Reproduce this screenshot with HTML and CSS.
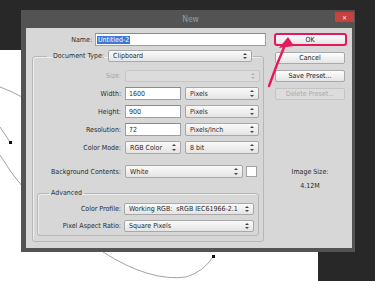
FILE: index.html
```html
<!DOCTYPE html>
<html lang="en">
<head>
  <meta charset="UTF-8" />
  <title>New</title>
  <link rel="stylesheet" href="styles.css">
</head>
<body>
  <!-- document canvas behind the dialog -->
  <div class="doc"></div>
  <svg class="paths" width="375" height="281" viewBox="0 0 375 281">
    <path d="M0 87 Q11 91 22 97" />
    <path d="M0 127 L10 142" />
    <path d="M0 155 Q10 172 22 186" />
    <path d="M103 252 Q150 282 186 277 Q203 272 213 257" />
    <rect class="anchor" x="9" y="141" width="3" height="3" />
    <rect class="anchor" x="212" y="255" width="3" height="3" />
  </svg>

  <div class="dialog">
    <div class="titlebar">
      <span class="title">New</span>
      <span class="close">&#x2715;</span>
    </div>
    <div class="panel">
      <div class="form">
        <div class="row name-row">
          <label class="lbl">Name:</label>
          <div class="input name"><span class="hl">Untitled-2</span></div>
        </div>

        <fieldset class="group">
          <legend>
            <label class="lbl doc-lbl">Document Type:</label>
            <div class="select doctype">Clipboard</div>
          </legend>
          <div class="row">
            <label class="lbl off">Size:</label>
            <div class="select off size"></div>
          </div>
          <div class="row">
            <label class="lbl">Width:</label>
            <div class="input num">1600</div>
            <div class="select unit">Pixels</div>
          </div>
          <div class="row">
            <label class="lbl">Height:</label>
            <div class="input num">900</div>
            <div class="select unit">Pixels</div>
          </div>
          <div class="row">
            <label class="lbl">Resolution:</label>
            <div class="input num">72</div>
            <div class="select unit">Pixels/Inch</div>
          </div>
          <div class="row">
            <label class="lbl">Color Mode:</label>
            <div class="select num">RGB Color</div>
            <div class="select unit">8 bit</div>
          </div>
          <div class="row bg-row">
            <label class="lbl">Background Contents:</label>
            <div class="select bgc">White</div>
            <div class="swatch"></div>
          </div>

          <fieldset class="group adv">
            <legend>Advanced</legend>
            <div class="row">
              <label class="lbl">Color Profile:</label>
              <div class="select wide">Working RGB:&nbsp; sRGB IEC61966-2.1</div>
            </div>
            <div class="row">
              <label class="lbl">Pixel Aspect Ratio:</label>
              <div class="select wide">Square Pixels</div>
            </div>
          </fieldset>
        </fieldset>
      </div>

      <div class="side">
        <button class="btn ok">OK</button>
        <button class="btn">Cancel</button>
        <button class="btn">Save Preset...</button>
        <button class="btn off">Delete Preset...</button>
        <div class="img-size">Image Size:</div>
        <div class="img-val">4.12M</div>
      </div>
    </div>
  </div>

  <!-- annotation arrow -->
  <svg class="arrow" width="375" height="281" viewBox="0 0 375 281">
    <path d="M269 86 Q276 66 285 45" />
    <polygon points="288,37 279,48 294,46" />
  </svg>
</body>
</html>
```

FILE: styles.css
```css
* {
  box-sizing: border-box;
}

body {
  margin: 0;
  width: 375px;
  height: 281px;
  overflow: hidden;
  position: relative;
  background-color: #282828;
  font-family: 'DejaVu Sans Condensed', 'DejaVu Sans', sans-serif;
  font-size: 7px;
  color: #2a2a2a;
}

.doc {
  position: absolute;
  left: 0;
  top: 50px;
  width: 318px;
  height: 231px;
  background: #ffffff;
}

.paths,
.arrow {
  position: absolute;
  left: 0;
  top: 0;
  pointer-events: none;
}

.paths path {
  fill: none;
  stroke: #8a8a8a;
  stroke-width: 0.8;
}

.paths .anchor {
  fill: #111;
}

.arrow path {
  fill: none;
  stroke: #e8185c;
  stroke-width: 2.4;
  stroke-linecap: round;
}

.arrow polygon {
  fill: #e8185c;
}

/* dialog window */
.dialog {
  position: absolute;
  left: 21px;
  top: 10px;
  width: 334px;
  height: 242px;
  background: #535353;
  padding: 0 3px 4px 5px;
  display: flex;
  flex-direction: column;
}

.titlebar {
  height: 18px;
  display: flex;
  align-items: center;
  justify-content: center;
  position: relative;
}

.title {
  font-size: 8.5px;
  color: #9c9c9c;
  margin-left: 3px;
}

.close {
  position: absolute;
  right: -2px;
  top: 2px;
  width: 19px;
  height: 10px;
  background: #c7423c;
  color: #fff;
  font-size: 6px;
  display: flex;
  align-items: center;
  justify-content: center;
}

.panel {
  flex: 1;
  background: #d7d7d7;
  display: flex;
  padding-top: 5px;
}

.form {
  width: 240px;
  padding-left: 6px;
}

.row {
  display: flex;
  align-items: center;
  height: 13px;
  margin-top: 5px;
}

.lbl {
  width: 92px;
  text-align: right;
  padding-right: 4px;
  white-space: nowrap;
}

.lbl.off {
  color: #a3a3a3;
}

.name-row {
  margin-top: 0;
}

.name-row .lbl {
  width: 63px;
  padding-right: 3px;
}

.input {
  height: 13px;
  background: #ffffff;
  border: 1px solid #9f9f9f;
  border-top-color: #8a8a8a;
  padding-left: 3px;
  display: flex;
  align-items: center;
}

.input.name {
  width: 171px;
  padding-left: 1px;
}

.hl {
  background: #3b77d8;
  color: #ffffff;
  padding: 0 1px;
}

.select {
  position: relative;
  height: 12px;
  background: linear-gradient(#fafafa, #e4e4e4);
  border: 1px solid #a8a8a8;
  border-radius: 2px;
  padding-left: 4px;
  display: flex;
  align-items: center;
  white-space: nowrap;
}

.select::before,
.select::after {
  content: "";
  position: absolute;
  right: 4px;
  border-left: 2px solid transparent;
  border-right: 2px solid transparent;
}

.select::before {
  top: 2px;
  border-bottom: 2px solid #444;
}

.select::after {
  bottom: 2px;
  border-top: 2px solid #444;
}

.select.off {
  background: #dcdcdc;
  border-color: #c5c5c5;
}

.select.off::before {
  border-bottom-color: #b0b0b0;
}

.select.off::after {
  border-top-color: #b0b0b0;
}

.num {
  width: 56px;
}

.select.num {
  height: 13px;
}

.unit {
  width: 74px;
  height: 13px;
  margin-left: 4px;
}

.size {
  width: 135px;
}

/* group boxes */
.group {
  margin: 4px 0 0 0;
  width: 232px;
  padding: 7px 0 5px 0;
  border: 1px solid #b7b7b7;
  border-radius: 3px;
  box-shadow: inset 1px 1px 0 #ececec;
}

.group > legend {
  margin-left: 14px;
  padding: 0 1px;
  display: flex;
  align-items: center;
}

.doc-lbl {
  width: 60px;
}

.doctype {
  width: 144px;
}

.group > .row:first-of-type {
  margin-top: 0;
}

.bg-row {
  margin-top: 11px;
}

.bgc {
  width: 118px;
  height: 13px;
}

.swatch {
  width: 11px;
  height: 11px;
  margin-left: 3px;
  background: #ffffff;
  border: 1px solid #a3a3a3;
}

.group.adv {
  margin: 10px 4px 0 4px;
  width: auto;
  padding: 5px 0 3px 0;
}

.adv > legend {
  margin-left: 11px;
  padding: 0 2px;
  line-height: 10px;
}

.adv .row {
  height: 12px;
}

.adv .lbl {
  width: 86px;
  padding-right: 3px;
}

.wide {
  width: 130px;
}

/* right column */
.side {
  width: 74px;
  margin-left: 7px;
  display: flex;
  flex-direction: column;
  align-items: center;
}

.btn {
  width: 70px;
  height: 12px;
  padding: 0;
  margin: 0 0 6px 0;
  font-family: inherit;
  font-size: 7px;
  color: #222;
  background: linear-gradient(#fdfdfd, #e5e5e5);
  border: 1px solid #a9a9a9;
  border-radius: 2px;
}

.btn.ok {
  width: 73px;
  height: 13px;
  border: 2px solid #e5185c;
  border-radius: 3px;
}

.btn.off {
  color: #ababab;
  background: #dcdcdc;
  border-color: #c4c4c4;
}

.img-size {
  margin-top: 61px;
  line-height: 10px;
}

.img-val {
  margin-top: 4px;
  line-height: 10px;
}
```
